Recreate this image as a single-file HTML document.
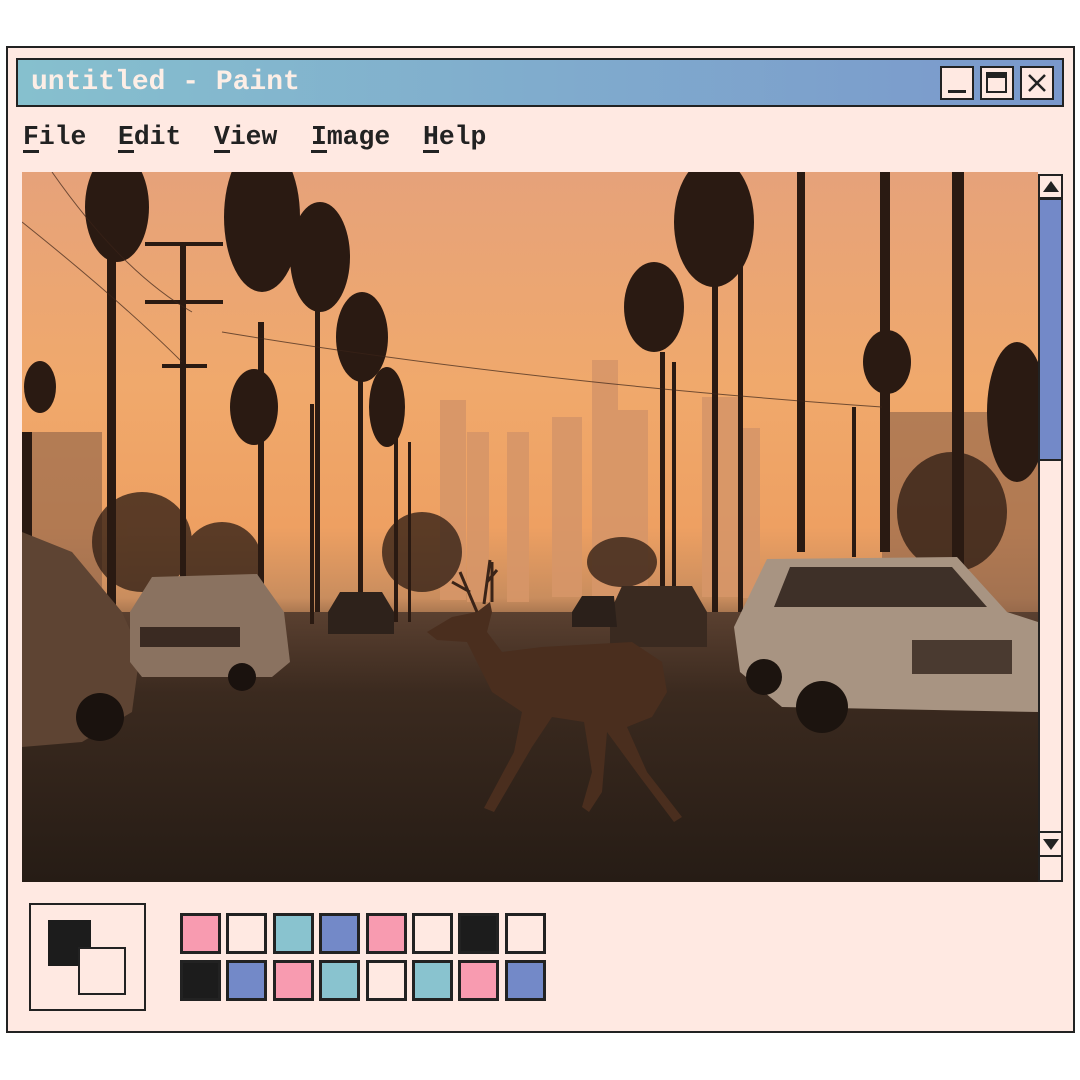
<!DOCTYPE html>
<html><head><meta charset="utf-8"><style>
*{margin:0;padding:0;box-sizing:border-box}
body{width:1080px;height:1080px;background:#fff;position:relative;overflow:hidden;font-family:"Liberation Mono",monospace}
.abs{position:absolute}
#win{left:6px;top:46px;width:1069px;height:987px;background:#ffe9e2;border:2px solid #222}
#title{left:16px;top:58px;width:1048px;height:49px;border:2px solid #222;background:linear-gradient(90deg,#86c0ce,#7a98cc)}
#title span{position:absolute;left:13px;top:7px;font-weight:bold;font-size:28px;color:#fdeee6}
.btn{top:66px;width:34px;height:34px;border:2.5px solid #222;background:#ffe9e2}
.menu{top:122px;font-weight:bold;font-size:26.4px;color:#222}
.menu u{text-decoration:none;border-bottom:3px solid #222;display:inline-block;line-height:26px}
.sw{width:41px;height:41px;border:3px solid #222}
</style></head><body>
<div id="win" class="abs"></div>
<div id="title" class="abs"><span>untitled - Paint</span></div>
<div class="abs btn" style="left:940px"><div class="abs" style="left:6px;top:22px;width:18px;height:3px;background:#222"></div></div>
<div class="abs btn" style="left:980px"><div class="abs" style="left:4px;top:4px;width:21px;height:21px;border:2.5px solid #222;border-top:6px solid #222"></div></div>
<div class="abs btn" style="left:1020px"><svg class="abs" style="left:4px;top:4px" width="22" height="22"><path d="M3 3L19 19M19 3L3 19" stroke="#222" stroke-width="2.5"/></svg></div>
<div class="abs menu" style="left:23px"><u>F</u>ile</div>
<div class="abs menu" style="left:118px"><u>E</u>dit</div>
<div class="abs menu" style="left:214px"><u>V</u>iew</div>
<div class="abs menu" style="left:311px"><u>I</u>mage</div>
<div class="abs menu" style="left:423px"><u>H</u>elp</div>

<svg class="abs" style="left:22px;top:172px" width="1016" height="710" viewBox="0 0 1016 710">
<defs>
<linearGradient id="sky" x1="0" y1="0" x2="0" y2="1">
<stop offset="0" stop-color="#e6a27a"/><stop offset="0.3" stop-color="#f0a96c"/><stop offset="0.5" stop-color="#eea062"/><stop offset="0.6" stop-color="#c98d5e"/><stop offset="0.66" stop-color="#6e4d36"/><stop offset="0.8" stop-color="#3d2c20"/><stop offset="1" stop-color="#2a1f17"/></linearGradient>
<linearGradient id="road" x1="0" y1="0" x2="0" y2="1"><stop offset="0" stop-color="#5a4030"/><stop offset="0.3" stop-color="#3b2a1f"/><stop offset="1" stop-color="#261c15"/></linearGradient>
</defs>
<rect width="1016" height="710" fill="url(#sky)"/>
<g fill="#d79668" opacity="0.9">
<rect x="418" y="228" width="26" height="200"/><rect x="445" y="260" width="22" height="170"/><rect x="485" y="260" width="22" height="170"/><rect x="530" y="245" width="30" height="180"/><rect x="570" y="188" width="26" height="240"/><rect x="596" y="238" width="30" height="190"/><rect x="680" y="225" width="36" height="200"/><rect x="716" y="256" width="22" height="170"/>
</g>
<path d="M0 440 L1016 440 L1016 710 L0 710Z" fill="url(#road)"/>
<g fill="#8a6048" opacity="0.6"><rect x="0" y="260" width="80" height="180"/><rect x="860" y="240" width="156" height="200"/></g>
<g fill="#2a1a12" opacity="0.75"><ellipse cx="120" cy="370" rx="50" ry="50"/><ellipse cx="400" cy="380" rx="40" ry="40"/><ellipse cx="930" cy="340" rx="55" ry="60"/><ellipse cx="600" cy="390" rx="35" ry="25"/><ellipse cx="200" cy="390" rx="40" ry="40"/></g>
<g fill="#2a1a12">
<rect x="85" y="80" width="9" height="360"/><rect x="158" y="70" width="6" height="370"/><rect x="123" y="70" width="78" height="4"/><rect x="123" y="128" width="78" height="4"/><rect x="140" y="192" width="45" height="4"/>
<rect x="236" y="150" width="6" height="300"/><rect x="293" y="120" width="5" height="320"/><rect x="336" y="200" width="5" height="240"/><rect x="288" y="232" width="4" height="220"/>
<rect x="372" y="250" width="4" height="200"/><rect x="386" y="270" width="3" height="180"/>
<rect x="638" y="180" width="5" height="260"/><rect x="650" y="190" width="4" height="240"/><rect x="690" y="110" width="6" height="330"/><rect x="716" y="80" width="5" height="360"/>
<rect x="775" y="0" width="8" height="380"/><rect x="858" y="0" width="10" height="380"/><rect x="930" y="0" width="12" height="400"/><rect x="830" y="235" width="4" height="150"/>
<ellipse cx="95" cy="35" rx="32" ry="55"/><ellipse cx="240" cy="45" rx="38" ry="75"/><ellipse cx="298" cy="85" rx="30" ry="55"/><ellipse cx="340" cy="165" rx="26" ry="45"/><ellipse cx="232" cy="235" rx="24" ry="38"/><ellipse cx="365" cy="235" rx="18" ry="40"/><ellipse cx="632" cy="135" rx="30" ry="45"/><ellipse cx="692" cy="50" rx="40" ry="65"/><ellipse cx="865" cy="190" rx="24" ry="32"/><ellipse cx="18" cy="215" rx="16" ry="26"/>
<ellipse cx="995" cy="240" rx="30" ry="70"/><rect x="0" y="260" width="10" height="180"/>
</g>
<g stroke="#3a2318" stroke-width="1" fill="none" opacity="0.7"><path d="M0 50 Q100 130 160 190"/><path d="M30 0 Q100 100 170 140"/><path d="M200 160 Q500 210 860 235"/></g>
<!-- cars -->
<path d="M0 360 L50 380 L100 440 L118 480 L110 540 L60 570 L0 575Z" fill="#5e4433"/>
<circle cx="78" cy="545" r="24" fill="#1a120e"/>
<path d="M108 440 L130 405 L235 402 L262 440 L268 490 L250 505 L120 505 L108 490Z" fill="#8a7260"/>
<rect x="118" y="455" width="100" height="20" fill="#3a2a22"/>
<circle cx="220" cy="505" r="14" fill="#1a120e"/>
<path d="M306 440 L318 420 L360 420 L372 440 L372 462 L306 462Z" fill="#2e221b"/>
<path d="M588 440 L600 414 L670 414 L685 440 L685 475 L588 475Z" fill="#3a2a20"/>
<path d="M550 440 L560 424 L592 424 L595 455 L550 455Z" fill="#2b201a"/>
<path d="M712 455 L745 387 L935 385 L985 440 L1016 450 L1016 540 L760 535 L718 500Z" fill="#a89482"/>
<path d="M752 435 L768 395 L930 395 L965 435Z" fill="#3e3028"/>
<rect x="890" y="468" width="100" height="34" fill="#4a3a30"/>
<circle cx="800" cy="535" r="26" fill="#1c140f"/><circle cx="742" cy="505" r="18" fill="#1c140f"/>
<!-- deer -->
<g fill="#4a2e1e">
<path d="M405 460 L430 445 L455 440 L468 430 L470 440 L465 460 L480 480 L520 475 L610 470 L640 490 L645 520 L630 545 L605 555 L625 600 L660 645 L652 650 L618 605 L585 560 L580 620 L567 640 L560 635 L570 600 L562 550 L530 545 L510 575 L472 640 L462 636 L492 580 L500 540 L470 520 L445 470 L415 468Z"/>
</g>
<g stroke="#3a2418" stroke-width="3" fill="none"><path d="M455 440 L438 400 M448 420 L430 410 M462 432 L468 388 M465 410 L475 398 M470 430 L470 390"/></g>
</svg>

<!-- scrollbar -->
<div class="abs" style="left:1038px;top:174px;width:25px;height:708px;border:2px solid #222;background:#ffe9e2"></div>
<div class="abs" style="left:1038px;top:174px;width:25px;height:25px;border:2px solid #222;background:#ffe9e2"><div class="abs" style="left:3px;top:5px;width:0;height:0;border-left:8px solid transparent;border-right:8px solid transparent;border-bottom:11px solid #222"></div></div>
<div class="abs" style="left:1038px;top:198px;width:25px;height:263px;border:2px solid #222;background:#7389c8"></div>
<div class="abs" style="left:1038px;top:831px;width:25px;height:26px;border:2px solid #222;background:#ffe9e2"><div class="abs" style="left:3px;top:6px;width:0;height:0;border-left:8px solid transparent;border-right:8px solid transparent;border-top:11px solid #222"></div></div>
<div class="abs" style="left:1038px;top:855px;width:25px;height:27px;border:2px solid #222;background:#ffe9e2"></div>

<!-- colour picker -->
<div class="abs" style="left:29px;top:903px;width:117px;height:108px;border:2.5px solid #222"></div>
<div class="abs" style="left:48px;top:920px;width:43px;height:46px;background:#1c1c1c"></div>
<div class="abs" style="left:78px;top:947px;width:48px;height:48px;border:2.5px solid #222;background:#ffe9e2"></div>

<div class="abs sw" style="left:180px;top:913px;background:#f89bb0"></div>
<div class="abs sw" style="left:226px;top:913px;background:#ffe9e2"></div>
<div class="abs sw" style="left:273px;top:913px;background:#89c3cf"></div>
<div class="abs sw" style="left:319px;top:913px;background:#7389c8"></div>
<div class="abs sw" style="left:366px;top:913px;background:#f89bb0"></div>
<div class="abs sw" style="left:412px;top:913px;background:#ffe9e2"></div>
<div class="abs sw" style="left:458px;top:913px;background:#1c1c1c"></div>
<div class="abs sw" style="left:505px;top:913px;background:#ffe9e2"></div>
<div class="abs sw" style="left:180px;top:960px;background:#1c1c1c"></div>
<div class="abs sw" style="left:226px;top:960px;background:#7389c8"></div>
<div class="abs sw" style="left:273px;top:960px;background:#f89bb0"></div>
<div class="abs sw" style="left:319px;top:960px;background:#89c3cf"></div>
<div class="abs sw" style="left:366px;top:960px;background:#ffe9e2"></div>
<div class="abs sw" style="left:412px;top:960px;background:#89c3cf"></div>
<div class="abs sw" style="left:458px;top:960px;background:#f89bb0"></div>
<div class="abs sw" style="left:505px;top:960px;background:#7389c8"></div>
</body></html>
